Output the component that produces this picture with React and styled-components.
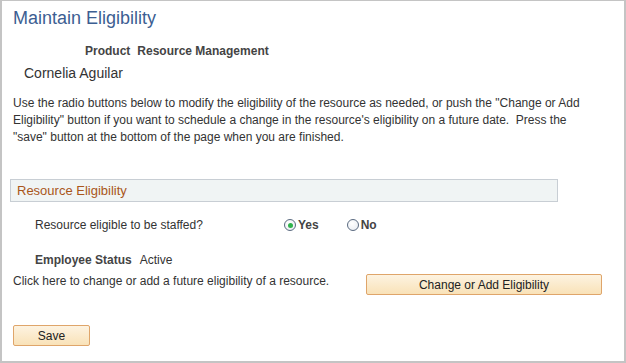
import React from 'react';
import styled, { createGlobalStyle } from 'styled-components';

const GlobalStyle = createGlobalStyle`
  html, body {
    margin: 0;
    padding: 0;
    background: #ffffff;
  }
  body {
    font-family: "Liberation Sans", Arial, sans-serif;
    color: #333333;
  }
`;

const RadioOption = ({ label, checked }) => (
    <RadioLabel>
        <RadioCircle checked={checked} />
        <RadioText>{label}</RadioText>
    </RadioLabel>
);

const App = () => (
    <>
        <GlobalStyle />
        <Frame>
            <Title>Maintain Eligibility</Title>
            <ProductRow>
                <FieldLabel>Product</FieldLabel>
                <FieldLabel>Resource Management</FieldLabel>
            </ProductRow>
            <PersonName>Cornelia Aguilar</PersonName>
            <Instructions>
                Use the radio buttons below to modify the eligibility of the resource as needed, or push the "Change or Add<br />
                Eligibility" button if you want to schedule a change in the resource's eligibility on a future date.&nbsp; Press the<br />
                "save" button at the bottom of the page when you are finished.
            </Instructions>
            <SectionHeader>Resource Eligibility</SectionHeader>
            <StaffRow>
                <Question>Resource eligible to be staffed?</Question>
                <RadioGroup>
                    <RadioOption label="Yes" checked />
                    <RadioOption label="No" />
                </RadioGroup>
            </StaffRow>
            <StatusRow>
                <FieldLabel>Employee Status</FieldLabel>
                <FieldValue>Active</FieldValue>
            </StatusRow>
            <ChangeRow>
                <Hint>Click here to change or add a future eligibility of a resource.</Hint>
                <Button wide>Change or Add Eligibility</Button>
            </ChangeRow>
            <SaveRow>
                <Button>Save</Button>
            </SaveRow>
        </Frame>
    </>
);

const Frame = styled.div`
    box-sizing: border-box;
    width: 626px;
    height: 363px;
    border: 1px solid #c4c4c4;
    border-width: 1px 2px 2px 2px;
    padding: 6px 0 0 11px;
    display: flex;
    flex-direction: column;
`;

const Title = styled.h1`
    margin: 0;
    font-size: 18px;
    font-weight: normal;
    color: #3c5e92;
    line-height: 22px;
`;

const ProductRow = styled.div`
    display: flex;
    gap: 7px;
    margin: 15px 0 0 72px;
    line-height: 15px;
`;

const FieldLabel = styled.span`
    font-size: 12px;
    font-weight: bold;
    color: #444444;
`;

const FieldValue = styled.span`
    font-size: 12px;
    color: #333333;
`;

const PersonName = styled.div`
    margin: 5px 0 0 11px;
    font-size: 14px;
    line-height: 18px;
    color: #333333;
`;

const Instructions = styled.p`
    margin: 13px 0 0 0;
    font-size: 12px;
    line-height: 17px;
    color: #333333;
    white-space: nowrap;
`;

const SectionHeader = styled.div`
    box-sizing: border-box;
    margin: 33px 0 0 -3px;
    width: 548px;
    height: 23px;
    background: #f0f4f4;
    border: 1px solid #c8ced4;
    padding: 0 0 0 6px;
    font-size: 13px;
    line-height: 21px;
    color: #a9561a;
`;

const StaffRow = styled.div`
    display: flex;
    align-items: center;
    margin: 14px 0 0 22px;
    height: 18px;
`;

const Question = styled.span`
    width: 249px;
    font-size: 12px;
    color: #333333;
`;

const RadioGroup = styled.div`
    display: flex;
    gap: 28px;
`;

const RadioLabel = styled.label`
    display: flex;
    align-items: center;
    gap: 2px;
`;

const RadioCircle = styled.span`
    box-sizing: border-box;
    width: 12px;
    height: 12px;
    border-radius: 50%;
    border: 1px solid #5a6a80;
    background: radial-gradient(circle at 40% 35%, #ffffff 0%, #e6eaf0 100%);
    display: flex;
    align-items: center;
    justify-content: center;
    &::after {
        content: '';
        width: 5px;
        height: 5px;
        border-radius: 50%;
        background: ${p => (p.checked ? '#2fb24c' : 'transparent')};
    }
`;

const RadioText = styled.span`
    font-size: 12px;
    font-weight: bold;
    color: #444444;
`;

const StatusRow = styled.div`
    display: flex;
    gap: 8px;
    margin: 19px 0 0 22px;
    line-height: 15px;
`;

const ChangeRow = styled.div`
    display: flex;
    align-items: flex-start;
    margin: 4px 0 0 0;
`;

const Hint = styled.span`
    width: 353px;
    margin-top: 2px;
    font-size: 12px;
    line-height: 15px;
    color: #333333;
`;

const Button = styled.button`
    box-sizing: border-box;
    width: ${p => (p.wide ? '236px' : '77px')};
    height: 21px;
    margin-top: ${p => (p.wide ? '2px' : '0')};
    padding: 0;
    border: 1px solid #dfa56a;
    border-radius: 2px;
    background: linear-gradient(to bottom, #fdf3e1 0%, #f9e2b8 100%);
    font-family: "Liberation Sans", Arial, sans-serif;
    font-size: 12px;
    color: #222222;
    cursor: pointer;
`;

const SaveRow = styled.div`
    margin: 30px 0 0 0;
`;

export default App;
